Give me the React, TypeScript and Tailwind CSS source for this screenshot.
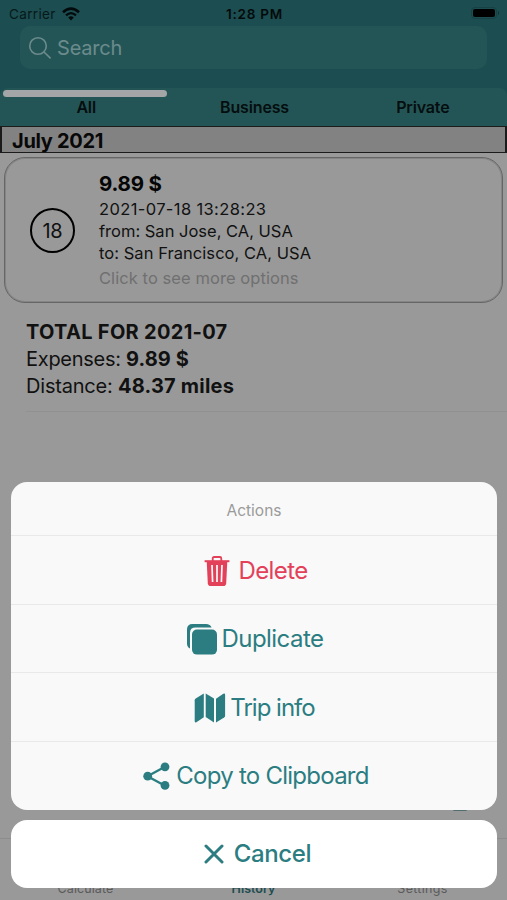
import type { ReactNode } from "react";

const tabs = ["All", "Business", "Private"];

function WifiIcon() {
  return (
    <svg className="ml-[6px] h-[14px] w-[18px]" viewBox="0 0 18 14">
      <path d="M1 5.3Q9-2.2 17 5.3" fill="none" stroke="#030a0b" strokeWidth="2.6" />
      <path d="M4 8.4Q9 3.9 14 8.4" fill="none" stroke="#030a0b" strokeWidth="2.3" />
      <path d="M6.2 10.4Q9 8.2 11.8 10.4L9 13.4Z" fill="#030a0b" />
    </svg>
  );
}

function SearchIcon() {
  return (
    <svg className="h-[24px] w-[24px]" viewBox="0 0 24 24" fill="none" stroke="#6b8b8d" strokeWidth="1.6">
      <circle cx="10" cy="10" r="8.3" />
      <path d="M16 16l6.6 6.4" />
    </svg>
  );
}

function TrashIcon() {
  return (
    <svg className="h-[32px] w-[26px]" viewBox="0 0 26 32" fill="none" stroke="#e3405a">
      <path d="M.6 6.2h24.8" strokeWidth="2" />
      <path d="M8.7 6V3.4Q8.7 2 10.1 2h5.8q1.4 0 1.4 1.4V6" strokeWidth="1.8" />
      <path
        d="M2.7 6h20.6l-1.1 22.2q-.2 2.8-2.8 2.8H6.6Q4 31 3.8 28.2Z"
        fill="#e3405a"
        stroke="none"
      />
      <path d="M8 10l.6 17M13 10v17M18 10l-.6 17" stroke="#f9f9f9" strokeWidth="1.7" />
    </svg>
  );
}

function DuplicateIcon() {
  return (
    <svg className="h-[32px] w-[32px]" viewBox="0 0 32 32" fill="#2b7d81">
      <path d="M4 25.5Q1 24.2 1 20.5V6.5Q1 1 6.5 1H20q4.3 0 5.6 3.6H9.5Q4 4.6 4 10Z" />
      <rect x="6" y="6.6" width="25" height="25" rx="5" />
    </svg>
  );
}

function MapIcon() {
  return (
    <svg className="h-[32px] w-[32px]" viewBox="0 0 32 32" fill="#2b7d81">
      <path d="M9.8 1.6v23.6l-7.4 5Q.7 31 .7 29V8.3q0-1.1 1-1.8Z" />
      <path d="M11.7 1.4l8.3 5.1v24L11.7 25Z" />
      <path d="M22 6.7l7.3-4.9q1.8-.9 1.8 1v21q0 1-1 1.7L22 30.4Z" />
    </svg>
  );
}

function ShareIcon() {
  return (
    <svg className="h-[28px] w-[27px]" viewBox="0 0 27 28" fill="#2b7d81">
      <path d="M22 4.8L4.5 14.2 22 23.8" fill="none" stroke="#2b7d81" strokeWidth="2.3" />
      <circle cx="4.7" cy="14.2" r="4.4" />
      <circle cx="22" cy="4.8" r="4.4" />
      <circle cx="22" cy="23.4" r="4.4" />
    </svg>
  );
}

function CloseIcon() {
  return (
    <svg className="h-[20px] w-[20px]" viewBox="0 0 20 20" stroke="#2b7d81" strokeWidth="3" strokeLinecap="round">
      <path d="M2 2l16 16M18 2L2 18" />
    </svg>
  );
}

function Action({ icon, children, className = "" }: { icon: ReactNode; children: ReactNode; className?: string }) {
  return (
    <button
      className={`flex h-[68.5px] w-full items-center justify-center border-t border-[#e9e9e9] text-[24px] leading-none ${className}`}
    >
      {icon}
      {children}
    </button>
  );
}

function Header() {
  return (
    <header className="h-[126px] bg-[#1c4d50]">
      <div className="grid h-[26px] grid-cols-3 items-center px-[9px] text-[13.5px] text-[#030a0b]">
        <div className="flex items-center pt-[2px] tracking-[0.35px] text-[#06191a]">
          Carrier
          <WifiIcon />
        </div>
        <div className="pl-[2px] pt-[2px] text-center font-semibold tracking-[0.8px]">1:28 PM</div>
        <div className="flex items-center justify-end">
          <span className="flex h-[12px] w-[26px] rounded-[4px] border border-[#174144] p-[1px]">
            <span className="flex-1 rounded-[2px] bg-black" />
          </span>
          <span className="-mr-[1px] ml-px h-[4px] w-[1px] rounded-r bg-[#123638]" />
        </div>
      </div>
      <div className="ml-[20px] flex h-[43px] w-[467px] items-center rounded-[10px] bg-[#245556] pl-[8px]">
        <SearchIcon />
        <span className="ml-[5px] text-[20px] tracking-[-0.2px] text-[#6b8b8d]">Search</span>
      </div>
      <nav className="relative mt-[19px] grid h-[38px] grid-cols-3 rounded-t-[8px] bg-[#245556] pl-[2px]">
        <span className="absolute left-[3px] top-[2px] h-[6.5px] w-[164px] rounded-full bg-[#a3a5a7]" />
        {tabs.map((tab) => (
          <span key={tab} className="pt-[7.5px] text-center text-[16px] font-semibold leading-[22px] tracking-[-0.15px] text-[#050e0f]">
            {tab}
          </span>
        ))}
      </nav>
    </header>
  );
}

function TripCard() {
  return (
    <div className="mx-[4px] mt-[4px] flex h-[146px] rounded-[21px] border border-[#666] text-[#111] ring-1 ring-inset ring-[#858585]">
      <div className="ml-[25px] mt-[50px] flex h-[45px] w-[45px] items-center justify-center rounded-full border-2 border-black text-[20px] tracking-[-0.2px]">
        18
      </div>
      <div className="ml-[24px] pt-[12px] text-[16.5px] leading-[22px]">
        <p className="text-[20.5px] font-bold leading-[28px] tracking-[-0.2px] text-[#050505]">9.89 $</p>
        <p className="tracking-[0.37px]">2021-07-18 13:28:23</p>
        <p>from: San Jose, CA, USA</p>
        <p className="tracking-[0.05px]">to: San Francisco, CA, USA</p>
        <p className="pt-[3px] tracking-[0.07px] text-[#707070]">Click to see more options</p>
      </div>
    </div>
  );
}

function ActionSheet() {
  return (
    <div className="absolute inset-x-[11px] top-[482px] w-[486px]">
      <div className="h-[327.5px] overflow-hidden rounded-[16px] bg-[#f9f9f9]">
        <p className="flex h-[53px] items-center justify-center pt-[4px] text-[15.5px] text-[#9b9b9b]">Actions</p>
        <Action icon={<TrashIcon />} className="gap-[8px] pl-[4px] pt-[2px] tracking-[-0.6px] text-[#e3405a]">
          <span>Delete</span>
        </Action>
        <Action icon={<DuplicateIcon />} className="gap-[4px] pl-px pt-px tracking-[-0.55px] text-[#2b7d81]">
          <span>Duplicate</span>
        </Action>
        <Action icon={<MapIcon />} className="gap-[4px] pl-px pt-[2px] tracking-[-1px] text-[#2b7d81]">
          <span>Trip info</span>
        </Action>
        <Action icon={<ShareIcon />} className="gap-[6px] pl-[4px] pt-px tracking-[-0.75px] text-[#2b7d81]">
          <span>Copy to Clipboard</span>
        </Action>
      </div>
      <button className="mt-[10px] flex h-[68px] w-full items-center justify-center gap-[10px] rounded-[16px] bg-white pl-[7px] text-[24px] font-medium tracking-[-0.35px] text-[#2b7d81]">
        <CloseIcon />
        <span>Cancel</span>
      </button>
    </div>
  );
}

export default function App() {
  return (
    <div className="relative flex h-[900px] w-[507px] flex-col overflow-hidden bg-[#999] font-[Inter,'Liberation_Sans',sans-serif]">
      <Header />
      <h2 className="h-[27px] border border-x-2 border-[#1b1b1b] bg-[#828282] pl-[10px] text-[20px] font-bold leading-[28px] tracking-[-0.3px] text-[#080808]">
        July 2021
      </h2>
      <TripCard />
      <div className="ml-[26px] border-b border-[#919191] pb-[11px] pt-[16px] text-[20px] leading-[27px] text-[#111]">
        <p className="font-bold tracking-[0.3px]">TOTAL FOR 2021-07</p>
        <p>
          <span className="tracking-[-0.28px]">Expenses: </span>
          <b className="tracking-[0.1px]">9.89 $</b>
        </p>
        <p>
          <span className="tracking-[-0.2px]">Distance: </span>
          <b className="tracking-[0.2px]">48.37 miles</b>
        </p>
      </div>
      <div className="mr-[40px] mt-auto mb-[27px] h-[3px] w-[14px] self-end rounded bg-[#4f6e6f]" />
      <footer className="grid h-[62px] grid-cols-3 items-end border-t border-[#8c8c8c] pb-[3px] text-center text-[12.5px] leading-[16px] text-[#5b5b5b]">
        <span className="pl-[2px] tracking-[0.1px]">Calculate</span>
        <span className="font-semibold text-[#1c4d50]">History</span>
        <span className="tracking-[0.3px]">Settings</span>
      </footer>
      <ActionSheet />
    </div>
  );
}
